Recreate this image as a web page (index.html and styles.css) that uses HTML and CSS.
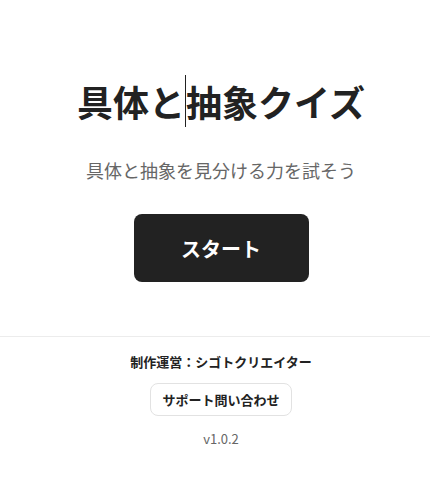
FILE: index.html
```html
<!DOCTYPE html>
<html lang="ja">
<head>
<meta charset="utf-8">
<link rel="stylesheet" href="styles.css">
</head>
<body>
<main class="hero">
  <h1 class="title">具体と<span class="caret"></span>抽象クイズ</h1>
  <p class="subtitle">具体と抽象を見分ける力を試そう</p>
  <button class="start">スタート</button>
</main>
<footer class="footer">
  <p class="credit">制作運営：シゴトクリエイター</p>
  <button class="support">サポート問い合わせ</button>
  <p class="version">v1.0.2</p>
</footer>
</body>
</html>
```
FILE: styles.css
```css
* { box-sizing: border-box; }
html, body { margin: 0; padding: 0; background: #fff; }
body {
  font-family: "Noto Sans CJK JP", "Noto Sans", sans-serif;
  color: #222;
}
.hero {
  display: flex;
  flex-direction: column;
  align-items: center;
  padding: 75px 0 54px 12px;
  border-bottom: 1px solid #ececec;
}
.title {
  margin: 0;
  font-size: 36px;
  line-height: 52px;
  font-weight: 700;
  color: #222;
  display: flex;
  align-items: center;
}
.caret {
  display: inline-block;
  width: 1px;
  height: 52px;
  background: #222;
}
.subtitle {
  margin: 30px 0 0;
  font-size: 18px;
  line-height: 26px;
  color: #666;
}
.start {
  margin-top: 31px;
  width: 175px;
  height: 68px;
  border: none;
  border-radius: 8px;
  background: #222;
  color: #fff;
  font-family: inherit;
  font-size: 20px;
  font-weight: 700;
}
.footer {
  display: flex;
  flex-direction: column;
  align-items: center;
  padding: 15px 0 0 12px;
}
.credit {
  margin: 0;
  font-size: 13px;
  line-height: 20px;
  font-weight: 700;
  color: #222;
}
.support {
  margin-top: 11px;
  height: 33px;
  padding: 0 11px;
  border: 1px solid #e2e2e2;
  border-radius: 8px;
  background: #fff;
  color: #222;
  font-family: inherit;
  font-size: 13px;
  font-weight: 700;
}
.version {
  margin: 13px 0 0;
  font-size: 13px;
  line-height: 20px;
  color: #666;
}
```
